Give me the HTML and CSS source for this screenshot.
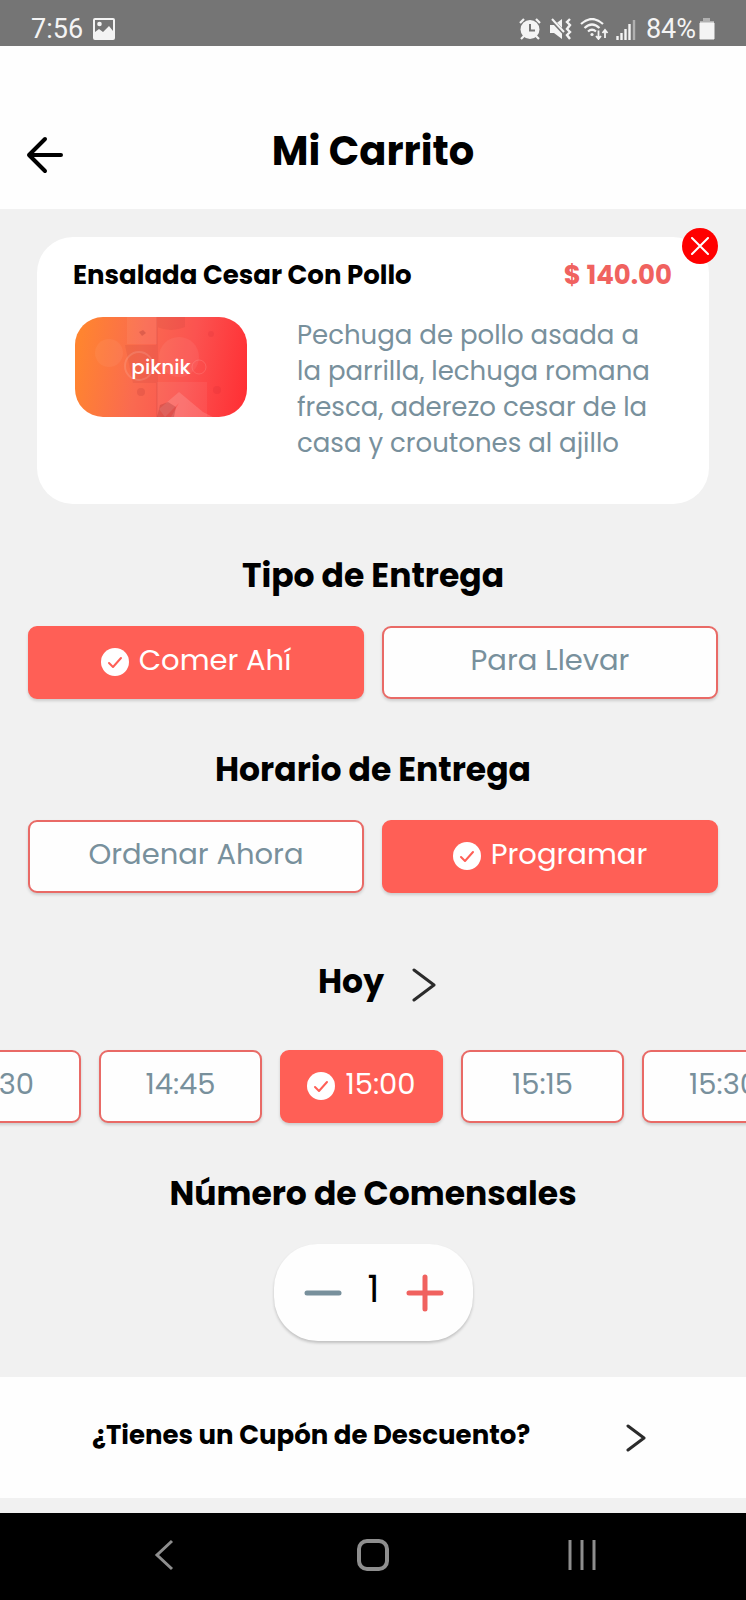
FILE: index.html
```html
<!DOCTYPE html>
<html lang="es">
<head>
  <meta charset="UTF-8">
  <title>Mi Carrito</title>
  <meta name="viewport" content="width=device-width, initial-scale=1.0">
  <link rel="stylesheet" href="styles.css">
</head>
<body>

<div class="status-bar">
  <div class="status-left">
    <span>7:56</span>
    <svg width="22" height="22" viewBox="0 0 22 22">
      <path fill="#f4f4f4" fill-rule="evenodd" d="M2 0h18a2 2 0 0 1 2 2v18a2 2 0 0 1-2 2H2a2 2 0 0 1-2-2V2a2 2 0 0 1 2-2zM2 2v12l4-3 4 3 6-6 4 5V2z"/>
      <circle cx="6.500" cy="6" r="2.300" fill="#f4f4f4"/>
    </svg>
  </div>
  <div class="status-right">
    <svg width="24" height="22" viewBox="0 0 24 22">
      <path d="M2 5l4-4M22 5l-4-4M6 18l-3 3M18 18l3 3" stroke="#f4f4f4" stroke-width="2.200" fill="none"/>
      <circle cx="12" cy="11.500" r="9.500" fill="#f4f4f4"/>
      <path d="M12 6v6.500h5" stroke="#757575" stroke-width="2" fill="none"/>
    </svg>
    <svg width="24" height="22" viewBox="0 0 24 22">
      <path d="M1 7h4l8-6v20l-8-6H1z" fill="#f4f4f4"/>
      <path d="M2 1l14 15" stroke="#757575" stroke-width="4"/>
      <path d="M3 1l12 13" stroke="#f4f4f4" stroke-width="2"/>
      <path d="M21 1l-3 3 3 3-3 4 3 3-3 3 3 4" stroke="#f4f4f4" stroke-width="2.400" fill="none"/>
    </svg>
    <svg width="29" height="22" viewBox="0 0 29 22">
      <path d="M1 6q11-10 22 0M4.500 10q7.500-7 15 0M8 13.500q4-3.500 8 0" stroke="#f4f4f4" stroke-width="2.200" fill="none"/>
      <circle cx="12" cy="16.500" r="1.600" fill="#f4f4f4"/>
      <path d="M18.500 12.500v8M16 18l2.500 3 2.500-3M25 20v-8M22.500 15l2.500-3 2.500 3" stroke="#f4f4f4" stroke-width="1.800" fill="none"/>
    </svg>
    <svg width="20" height="22" viewBox="0 0 20 22">
      <path d="M1.500 22v-4M5.500 22v-7M9.500 22V11M13.500 22V6" stroke="#f4f4f4" stroke-width="2.400"/>
      <path d="M18 22V2" stroke="#b0b0b0" stroke-width="2.400"/>
    </svg>
    <div class="battery">
      <span>84%</span>
      <svg width="16" height="22" viewBox="0 0 16 22">
        <path d="M4 0h7v3h4v3H1V3h3z" fill="#b0b0b0"/>
        <path d="M1 5h14v16H1z" fill="#f4f4f4" stroke="#f4f4f4"/>
      </svg>
    </div>
  </div>
</div>

<header class="header">
  <button class="back" aria-label="Regresar">
    <svg width="38" height="38" viewBox="0 0 38 38">
      <path d="M35 19H3M19 3L3 19l16 16" fill="none" stroke="#000" stroke-width="4" stroke-linecap="round" stroke-linejoin="round"/>
    </svg>
  </button>
  <h1>Mi Carrito</h1>
</header>

<main>
  <article class="card">
    <button class="remove" aria-label="Eliminar">
      <svg width="18" height="18" viewBox="0 0 18 18">
        <path d="M1 1l16 16M17 1L1 17" stroke="#fff" stroke-width="2" stroke-linecap="round"/>
      </svg>
    </button>
    <div class="card-head">
      <h2>Ensalada Cesar Con Pollo</h2>
      <span class="price">$ 140.00</span>
    </div>
    <div class="card-body">
      <div class="photo">
        <svg class="pattern" viewBox="0 0 172 100" aria-hidden="true">
          <path d="M52 0h30v27H52zM82 65h50v35H82z" fill="#fff" opacity=".06"/>
          <path d="M50 28h32v38H58zM82 0h28v10q-14 6-28 0zM81 0h2v100h-2z" fill="#b03030" opacity=".12"/>
          <circle cx="34" cy="36" r="14" fill="#fff" opacity=".05"/>
          <circle cx="64" cy="49" r="14" fill="none" stroke="#fff" stroke-width="2" opacity=".12"/>
          <circle cx="104" cy="40" r="20" fill="#fff" opacity=".06"/>
          <circle cx="124" cy="50" r="7" fill="none" stroke="#fff" opacity=".12"/>
          <path d="M84 92l20-17 24 20 10 5H96l8-14-14 14z" fill="#fff" opacity=".14"/>
          <path d="M85 88l8-3 8 5-2 10H82zM64 15l4-2 3 3-4 3z" fill="#a03030" opacity=".3"/>
          <circle cx="66" cy="75" r="4" fill="#b03030" opacity=".2"/>
          <circle cx="142" cy="73" r="4" fill="#c02030" opacity=".15"/>
          <circle cx="136" cy="17" r="3" fill="#c02030" opacity=".15"/>
        </svg>
        <span>piknik</span>
      </div>
      <p>Pechuga de pollo asada a la parrilla, lechuga romana fresca, aderezo cesar de la casa y croutones al ajillo</p>
    </div>
  </article>

  <section>
    <h2>Tipo de Entrega</h2>
    <div class="options">
      <button class="option active" aria-pressed="true">
        <svg class="check" viewBox="0 0 28 28"><circle cx="14" cy="14" r="14" fill="#fff"/><path d="M8 15l4 4 8-9" fill="none" stroke="#ff5f56" stroke-width="2" stroke-linecap="round" stroke-linejoin="round"/></svg>
        <span>Comer Ahí</span>
      </button>
      <button class="option" aria-pressed="false"><span>Para Llevar</span></button>
    </div>
  </section>

  <section>
    <h2>Horario de Entrega</h2>
    <div class="options">
      <button class="option" aria-pressed="false"><span>Ordenar Ahora</span></button>
      <button class="option active" aria-pressed="true">
        <svg class="check" viewBox="0 0 28 28"><circle cx="14" cy="14" r="14" fill="#fff"/><path d="M8 15l4 4 8-9" fill="none" stroke="#ff5f56" stroke-width="2" stroke-linecap="round" stroke-linejoin="round"/></svg>
        <span>Programar</span>
      </button>
    </div>
  </section>

  <section class="schedule">
    <div class="day">
      <h2>Hoy</h2>
      <button class="next-day" aria-label="Día siguiente">
        <svg width="24" height="34" viewBox="0 0 24 34"><path d="M2 2l20 15L2 32" fill="none" stroke="#2b2b2b" stroke-width="3" stroke-linecap="round" stroke-linejoin="round"/></svg>
      </button>
    </div>
    <div class="slots">
      <button class="option" aria-pressed="false"><span>14:30</span></button>
      <button class="option" aria-pressed="false"><span>14:45</span></button>
      <button class="option active" aria-pressed="true">
        <svg class="check" viewBox="0 0 28 28"><circle cx="14" cy="14" r="14" fill="#fff"/><path d="M8 15l4 4 8-9" fill="none" stroke="#ff5f56" stroke-width="2" stroke-linecap="round" stroke-linejoin="round"/></svg>
        <span>15:00</span>
      </button>
      <button class="option" aria-pressed="false"><span>15:15</span></button>
      <button class="option" aria-pressed="false"><span>15:30</span></button>
    </div>
  </section>

  <section class="guests">
    <h2>Número de Comensales</h2>
    <div class="stepper">
      <button aria-label="Menos">
        <svg width="38" height="38" viewBox="0 0 38 38"><path d="M3 19h32" stroke="#78909c" stroke-width="5" stroke-linecap="round"/></svg>
      </button>
      <span>1</span>
      <button aria-label="Más">
        <svg width="38" height="38" viewBox="0 0 38 38"><path d="M3 19h32M19 3v32" stroke="#f0625f" stroke-width="5" stroke-linecap="round"/></svg>
      </button>
    </div>
  </section>

  <button class="coupon">
    <span>¿Tienes un Cupón de Descuento?</span>
    <svg width="20" height="28" viewBox="0 0 20 28"><path d="M2 2l16 12L2 26" fill="none" stroke="#2b2b2b" stroke-width="3" stroke-linecap="round" stroke-linejoin="round"/></svg>
  </button>
</main>

<nav class="nav-bar">
  <button aria-label="Atrás">
    <svg width="34" height="34" viewBox="0 0 34 34"><path d="M25 3L10 17l15 14" fill="none" stroke="#8e8e8e" stroke-width="3"/></svg>
  </button>
  <button aria-label="Inicio">
    <svg width="34" height="34" viewBox="0 0 34 34"><rect x="3" y="3" width="28" height="28" rx="8" fill="none" stroke="#8e8e8e" stroke-width="4"/></svg>
  </button>
  <button aria-label="Recientes">
    <svg width="34" height="34" viewBox="0 0 34 34"><path d="M5 2v30M17 2v30M29 2v30" stroke="#8e8e8e" stroke-width="3"/></svg>
  </button>
</nav>

</body>
</html>
```
FILE: styles.css
```css
* {
  box-sizing: border-box;
}

body {
  font-family: Poppins, Inter, sans-serif;
  background-color: #f1f1f1;
  color: #000;
  margin: 0;
  min-height: 100vh;
  display: flex;
  flex-direction: column;
}

h1, h2, p {
  margin: 0;
}

button {
  font-family: inherit;
  color: inherit;
  background: none;
  border: 0;
  padding: 0;
  cursor: pointer;
}

svg {
  display: block;
  flex: none;
}

/* Barra de estado */
.status-bar {
  display: flex;
  justify-content: space-between;
  height: 46px;
  padding: 12px 31px 0 31px;
  background-color: #757575;
  color: #f4f4f4;
  font-family: Roboto, sans-serif;
  font-size: 27px;
  line-height: 36px;
}

.status-left, .status-right {
  display: flex;
  align-items: center;
  height: 34px;
}

.status-left {
  gap: 10px;
}

.status-right {
  gap: 7px;
}

.battery {
  display: flex;
  align-items: center;
  gap: 3px;
  margin-left: 3px;
}

/* Encabezado */
.header {
  display: grid;
  grid-template-columns: 48px 1fr 48px;
  align-items: center;
  padding: 76px 26px 22px;
  background-color: #fefefe;
}

.header h1 {
  text-align: center;
  font-size: 40px;
  line-height: 59px;
  padding-bottom: 6px;
}

/* Producto */
.card {
  position: relative;
  margin: 28px 37px 49px;
  padding: 18px 37px 43px 36px;
  background-color: #fff;
  border-radius: 36px;
}

.remove {
  position: absolute;
  top: -9px;
  right: -9px;
  width: 36px;
  height: 36px;
  border-radius: 50%;
  background-color: #f00;
  display: flex;
  align-items: center;
  justify-content: center;
}

.card-head {
  display: flex;
  justify-content: space-between;
  font-size: 26px;
  line-height: 40px;
}

.card-head h2 {
  font-size: 26px;
}

.price {
  font-weight: 700;
  color: #f0625f;
}

.card-body {
  display: flex;
  gap: 50px;
  padding: 22px 0 0 2px;
}

.card-body p {
  flex: 1;
  padding-right: 18px;
  font-size: 26px;
  line-height: 36px;
  color: #78909c;
}

.photo {
  position: relative;
  width: 172px;
  height: 100px;
  border-radius: 28px;
  overflow: hidden;
  background: linear-gradient(100deg, #ff8430 5%, #fa6a50 38%, #fb5350 65%, #ff3035 97%);
  display: flex;
  align-items: center;
  justify-content: center;
}

.pattern {
  position: absolute;
  inset: 0;
}

.photo span {
  position: relative;
  font-weight: 500;
  font-size: 20px;
  line-height: 30px;
  color: #fff;
}

/* Secciones */
section {
  margin-bottom: 48px;
}

section h2 {
  text-align: center;
  font-size: 33px;
  line-height: 46px;
}

.options {
  display: flex;
  gap: 18px;
  padding: 27px 28px 0;
}

.option {
  flex: 1;
  display: flex;
  align-items: center;
  justify-content: center;
  gap: 10px;
  height: 73px;
  padding-bottom: 5px;
  border: 2px solid #e96a66;
  border-radius: 9px;
  background-color: #fefefe;
  color: #78909c;
  font-size: 29px;
  box-shadow: 0 2px 3px rgba(0, 0, 0, 0.15);
}

.option.active {
  background-color: #ff5f56;
  border-color: #ff5f56;
  color: #fff;
}

.check {
  width: 28px;
  height: 28px;
  margin-top: 4px;
}

.schedule {
  overflow-x: clip;
}

.day {
  display: flex;
  align-items: center;
  justify-content: center;
  gap: 28px;
  padding: 18px 0 45px 8px;
}

.next-day {
  margin-top: 6px;
}

.slots {
  display: flex;
  gap: 18px;
  margin-left: -82px;
}

.slots .option {
  flex: 0 0 163px;
}

/* Comensales */
.guests {
  margin-bottom: 36px;
}

.stepper {
  display: flex;
  align-items: center;
  justify-content: space-between;
  width: 199px;
  height: 97px;
  margin: 27px auto 0;
  padding: 0 29px 0 30px;
  border-radius: 44px;
  background-color: #fefefe;
  box-shadow: 0 2px 3px rgba(0, 0, 0, 0.2);
  font-size: 37px;
}

.stepper span {
  padding-bottom: 8px;
}

/* Cupon */
.coupon {
  display: flex;
  align-items: center;
  justify-content: space-between;
  width: 100%;
  height: 121px;
  padding: 0 100px 0 92px;
  background-color: #fefefe;
  color: #000;
  font-size: 26px;
  font-weight: 700;
}

.coupon span {
  padding-bottom: 4px;
}

/* Barra de navegacion */
.nav-bar {
  display: grid;
  grid-template-columns: repeat(3, 1fr);
  justify-items: center;
  align-items: center;
  height: 87px;
  margin-top: auto;
  padding: 0 8% 4px;
  background-color: #000;
}
```
